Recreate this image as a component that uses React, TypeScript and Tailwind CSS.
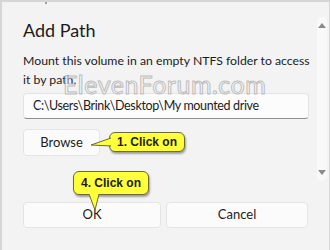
import React from 'react';

const ui = { fontFamily: 'Lato, "Noto Sans", sans-serif' };
const callout = { fontFamily: '"Liberation Sans", Arial, sans-serif' };

const Callout: React.FC<{ label: string; className: string; tail: 'left' | 'down' }> = ({ label, className, tail }) => (
  <div className={`absolute ${className}`}>
    <div
      className={`relative rounded-[6px] border border-[#6b6b3a] bg-[#ffff3a] px-[7px] text-[12px] font-bold text-[#1a1a1a] shadow-[1px_2px_2px_rgba(0,0,0,0.35)] whitespace-nowrap ${
        tail === 'down' ? 'py-[2px]' : 'py-0'
      }`}
      style={callout}
    >
      {label}
    </div>
    {tail === 'left' ? (
      <svg className="absolute -left-[19px] top-[5px]" width="21" height="12" viewBox="0 0 21 12">
        <path d="M21 1 L1 8 L21 9" fill="#ffff3a" stroke="#6b6b3a" strokeWidth="1" />
      </svg>
    ) : (
      <svg className="absolute left-[15px] -bottom-[16px]" width="14" height="17" viewBox="0 0 14 17">
        <path d="M1 0 L7 16 L11 0" fill="#ffff3a" stroke="#6b6b3a" strokeWidth="1" />
      </svg>
    )}
  </div>
);

export default function App() {
  return (
    <div className="relative w-[330px] h-[250px] overflow-hidden bg-[#f3f3f3] border-l-[2px] border-t-[2px] border-r border-[#d6d6d6]" style={ui}>
      <div className="absolute left-[43px] top-0 w-[2px] h-[2px] bg-[#a0a0a0]" />

      {/* scrollbar */}
      <div className="absolute right-[2px] top-[15px] w-[10px] h-[164px] rounded-[5px] bg-[#f9f9f9] flex flex-col items-center justify-between py-[6px]">
        <div className="w-0 h-0 border-x-[4px] border-x-transparent border-b-[5px] border-b-[#8a8a8a]" />
        <div className="w-0 h-0 border-x-[4px] border-x-transparent border-t-[5px] border-t-[#8a8a8a]" />
      </div>

      <div className="flex flex-col pl-[21px] pr-[20px] pt-[16px]">
        <div className="text-[18px] leading-[24px] text-[#1b1b1b]">Add Path</div>
        <p className="mt-[9px] text-[12.25px] leading-[19px] text-[#1b1b1b] whitespace-nowrap">
          Mount this volume in an empty NTFS folder to access
          <br />
          it by path.
        </p>

        <div className="mt-[4px] h-[26px] rounded-[4px] border border-[#e3e3e3] border-b-[#8e8e8e] bg-[#fcfcfc] flex items-center px-[9px] text-[12.5px] tracking-[-0.35px] text-[#1b1b1b] whitespace-nowrap overflow-hidden">
          C:\Users\Brink\Desktop\My mounted drive
        </div>

        <div className="mt-[10px] w-[77px] h-[27px] rounded-[4px] border border-[#e5e5e5] bg-[#fbfbfb] flex items-center justify-center text-[13px] text-[#1b1b1b]">
          Browse
        </div>

        <div className="mt-[46px] flex gap-[5px]">
          <div className="w-[138px] h-[26px] rounded-[4px] border border-[#e5e5e5] bg-[#fbfbfb] flex items-center justify-center text-[13px] text-[#1b1b1b]">
            OK
          </div>
          <div className="w-[142px] h-[26px] rounded-[4px] border border-[#e5e5e5] bg-[#fbfbfb] flex items-center justify-center text-[13px] text-[#1b1b1b]">
            Cancel
          </div>
        </div>
      </div>

      {/* watermark */}
      <div
        className="absolute left-[61px] top-[69px] text-[25px] leading-[26px] tracking-[0.5px] text-[rgba(255,255,255,0.55)] [-webkit-text-stroke:1px_#bcbcbc] whitespace-nowrap"
        style={ui}
      >
        ElevenForum.com
      </div>

      <Callout label="1. Click on" className="left-[107px] top-[130px]" tail="left" />
      <Callout label="4. Click on" className="left-[71px] top-[169px]" tail="down" />
    </div>
  );
}
